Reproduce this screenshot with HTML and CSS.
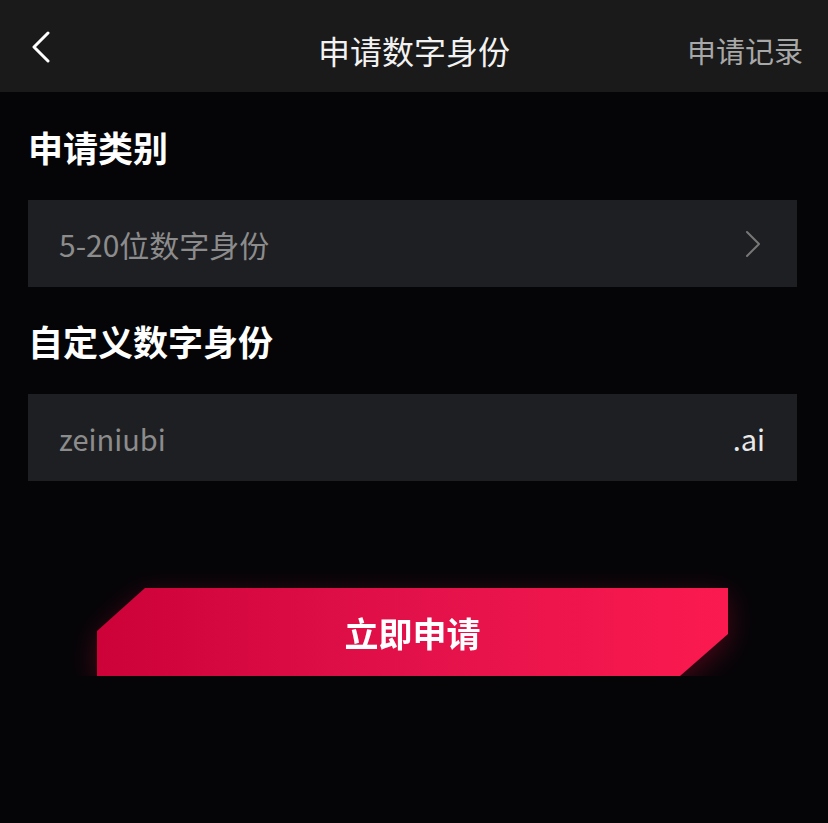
FILE: index.html
```html
<!DOCTYPE html>
<html lang="zh-CN">
<head>
  <meta charset="UTF-8">
  <meta name="viewport" content="width=device-width, initial-scale=1.0">
  <title>申请数字身份</title>
  <link rel="stylesheet" href="styles.css">
</head>
<body>
  <!-- 顶部导航 -->
  <header class="nav">
    <a class="nav-back" href="#">
      <svg width="20" height="32" viewBox="0 0 20 32">
        <path d="M17 2 L3 16 L17 30" fill="none" stroke="#fff" stroke-width="3" stroke-linecap="round" stroke-linejoin="round"/>
      </svg>
    </a>
    <div class="nav-title">申请数字身份</div>
    <a class="nav-link" href="#">申请记录</a>
  </header>

  <main class="content">
    <!-- 申请类别 -->
    <div class="section-label">申请类别</div>
    <div class="field">
      <span class="field-value">5-20位数字身份</span>
      <svg class="field-arrow" width="16" height="28" viewBox="0 0 16 28">
        <path d="M2 2 L14 14 L2 26" fill="none" stroke="#777" stroke-width="2" stroke-linecap="round" stroke-linejoin="round"/>
      </svg>
    </div>

    <!-- 自定义数字身份 -->
    <div class="section-label">自定义数字身份</div>
    <div class="field">
      <span class="field-value small">zeiniubi</span>
      <span class="field-suffix">.ai</span>
    </div>

    <div class="submit-wrap">
      <button class="submit">立即申请</button>
    </div>
  </main>
</body>
</html>
```

FILE: styles.css
```css
body { margin: 0; background: #050508; color: #fff; font-family: "Noto Sans CJK SC", "Noto Sans", sans-serif; }
a { color: inherit; text-decoration: none; }

.nav { height: 92px; background: #1a1a1a; display: flex; align-items: center; justify-content: space-between; padding: 0 25px 0 31px; position: relative; }
.nav-back { display: flex; align-items: center; margin-top: 2px; }
.nav-title { position: absolute; left: 0; right: 0; text-align: center; font-size: 32px; pointer-events: none; color: #f2f2f2; margin-top: 8px; }
.nav-link { font-size: 29px; color: #a8a8a8; margin-top: 8px; }

.content { padding: 31px 31px 0 28px; }
.section-label { font-size: 35px; font-weight: bold; line-height: 48px; margin-bottom: 29px; }
.field + .section-label { margin-top: 30px; }

.field { height: 87px; background: #1e1f23; display: flex; align-items: center; justify-content: space-between; padding: 0 32px 0 31px; box-sizing: border-box; }
.field-value { font-size: 30px; color: #8c8c8c; }
.field-value.small { font-size: 29px; }
.field-arrow { margin-right: 4px; }
.field-suffix { font-size: 29px; color: #e8e8e8; }

.submit-wrap { width: 631px; margin: 107px auto 0; filter: drop-shadow(0 8px 14px rgba(200, 10, 50, 0.35)); }
.submit { display: block; width: 100%; height: 88px; border: none; cursor: pointer; color: #fff; font-family: inherit; font-size: 34px; font-weight: bold; background: linear-gradient(90deg, #cc0238 0%, #e3114a 50%, #fb1a4f 100%); clip-path: polygon(48px 0, 100% 0, 100% 46px, calc(100% - 48px) 100%, 0 100%, 0 43px); }
```
